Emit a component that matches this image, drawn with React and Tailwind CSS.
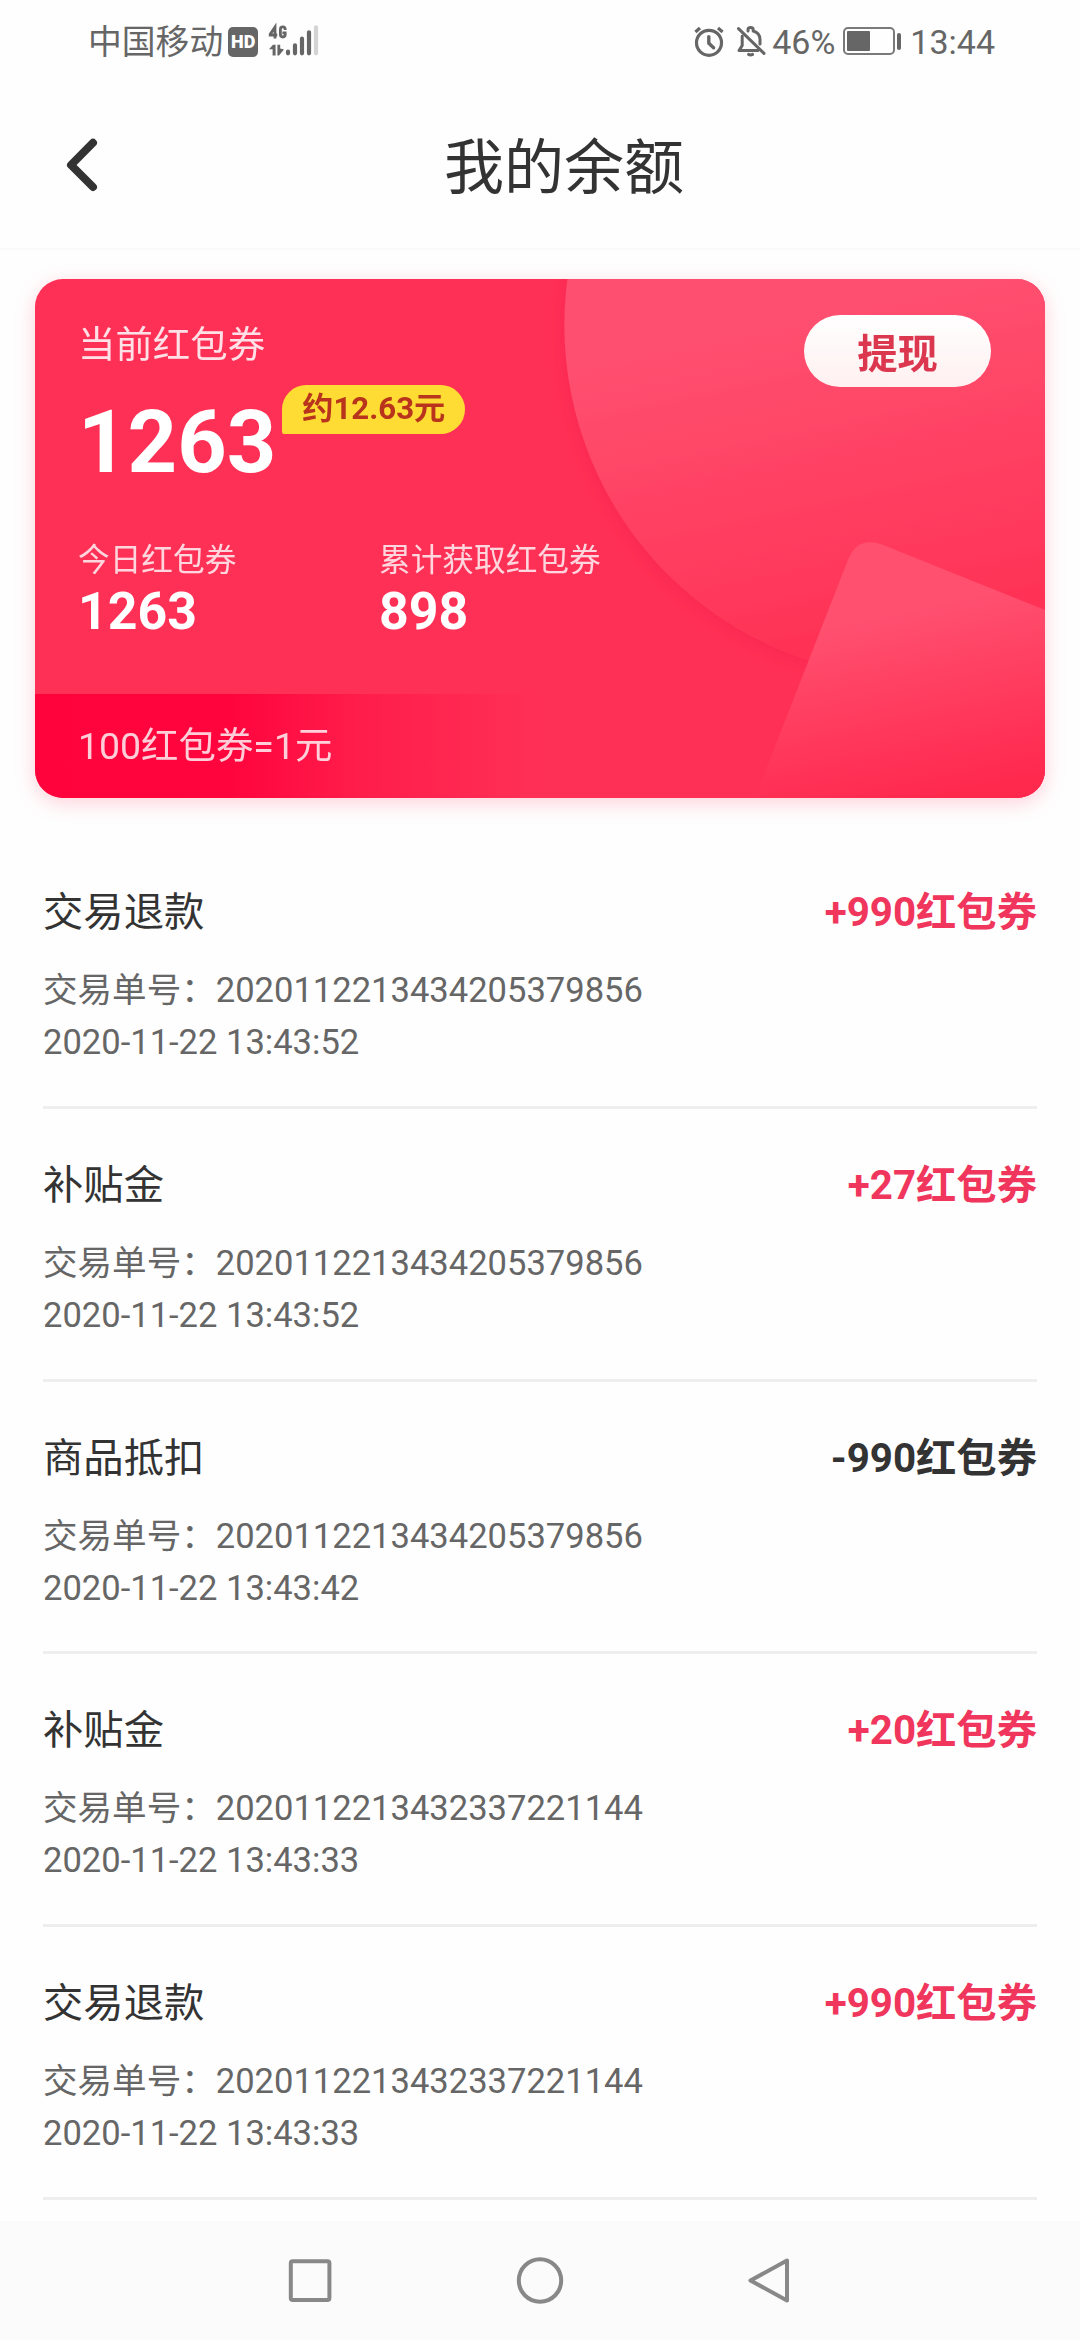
const records = [
  { title: "交易退款", amount: "+990红包券", no: "2020112213434205379856", time: "2020-11-22 13:43:52" },
  { title: "补贴金", amount: "+27红包券", no: "2020112213434205379856", time: "2020-11-22 13:43:52" },
  { title: "商品抵扣", amount: "-990红包券", no: "2020112213434205379856", time: "2020-11-22 13:43:42" },
  { title: "补贴金", amount: "+20红包券", no: "2020112213432337221144", time: "2020-11-22 13:43:33" },
  { title: "交易退款", amount: "+990红包券", no: "2020112213432337221144", time: "2020-11-22 13:43:33" },
];

function SignalIcon() {
  return (
    <svg className="ml-[9px] h-[32px] w-[54px] overflow-visible" viewBox="0 0 54 32" fill="none">
      <g stroke="#666" strokeWidth="2.8">
        <path d="M8 12.4V1L3.2 8.2V9H10.2" />
        <path d="M18.2 4V3.2Q18.2 0.8 15.8 0.8Q13.4 0.8 13.4 3.2V8.6Q13.4 11 15.8 11Q18.2 11 18.2 8.6V6.8H15.4" />
      </g>
      <path d="M2 23.2L6 18.8H8.6V29.6H5.6V23.2ZM10.4 18.8H13.2V22.6L17 23.4L12 29.6H10.4Z" fill="#666" />
      <g stroke="#666" strokeWidth="4.2" strokeLinecap="round">
        <path d="M21 25.6V27.3M28 19.3V27.3M35 12.7V27.3M42 6.3V27.3" />
      </g>
      <path d="M49 1.3V27.3" stroke="#d4d4d4" strokeWidth="4.2" strokeLinecap="round" />
    </svg>
  );
}

function AlarmIcon() {
  return (
    <svg className="h-[32px] w-[32px]" viewBox="0 0 32 32" fill="none" stroke="#666" strokeLinecap="round" strokeLinejoin="round">
      <circle cx="16" cy="16.8" r="12.5" strokeWidth="3.2" />
      <path d="M15.8 10.6V17.2L20.6 21.8" strokeWidth="3.4" />
      <path d="M2.4 6L7 2M29.6 6L25 2" strokeWidth="3.2" strokeLinecap="butt" />
    </svg>
  );
}

function MutedBellIcon() {
  return (
    <svg className="ml-[11px] h-[32px] w-[30px]" viewBox="0 0 30 32" fill="none" stroke="#666" strokeWidth="3" strokeLinecap="round" strokeLinejoin="round">
      <path d="M2.5 2.6L28 27.4" />
      <path d="M6.2 10V19.5L3 24.6H22" />
      <path d="M12 5V3.8Q12 1.6 14.6 1.6Q17.2 1.6 17.2 3.8V5Q24 7 24 13.5V18" />
      <path d="M12.6 28.4Q14.6 29.6 16.6 28.4" />
    </svg>
  );
}

function StatusBar() {
  return (
    <div className="flex h-[84px] items-center justify-between pr-[85px] pl-[88px] text-[34px] leading-[40px] text-[#666]">
      <div className="flex items-center">
        <span className="mt-[2px] text-[33.8px]">中国移动</span>
        <span className="ml-[5px] flex h-[30px] w-[30px] items-center justify-center rounded-[5px] bg-[#666] font-['Roboto'] text-[18px] leading-[30px] font-black text-white">
          HD
        </span>
        <SignalIcon />
      </div>
      <div className="flex items-center">
        <AlarmIcon />
        <MutedBellIcon />
        <span className="ml-[6px] -mt-[1px]">46%</span>
        <span className="ml-[8px] -mt-[2px] flex h-[28px] w-[52px] rounded-[5px] border-2 border-[#7a7a7a] p-[2px]">
          <span className="h-full w-[23px] rounded-[1px] bg-[#666]" />
        </span>
        <span className="ml-[2px] -mt-[2px] h-[17px] w-[4px] rounded-full bg-[#666]" />
        <span className="ml-[9px] -mt-[1px]">13:44</span>
      </div>
    </div>
  );
}

function Header() {
  return (
    <header className="flex h-[166px] items-center border-b-2 border-[#fafafa]">
      <svg className="ml-[64px] h-[60px] w-[36px]" viewBox="0 0 36 60" fill="none" stroke="#333" strokeWidth="8" strokeLinecap="round" strokeLinejoin="round">
        <path d="M29 6.8L7 29L29 51" />
      </svg>
      <h1 className="mt-[6px] ml-[344px] text-[60px] leading-[72px] text-[#333]">我的余额</h1>
    </header>
  );
}

function CardArt() {
  return (
    <svg className="absolute inset-0 h-full w-full" viewBox="0 0 1010 519" fill="none">
      <defs>
        <linearGradient id="disc" gradientUnits="userSpaceOnUse" x1="640" y1="60" x2="710" y2="390">
          <stop offset="0" stopColor="#ff5070" />
          <stop offset="0.95" stopColor="#ff3357" />
        </linearGradient>
        <linearGradient id="tile" gradientUnits="userSpaceOnUse" x1="880" y1="330" x2="920" y2="519">
          <stop offset="0" stopColor="#ff5070" />
          <stop offset="0.7" stopColor="#ff3357" />
          <stop offset="1" stopColor="#ff284d" />
        </linearGradient>
        <linearGradient id="band" x1="0" y1="0" x2="1" y2="0">
          <stop offset="0" stopColor="#ff033c" />
          <stop offset="0.19" stopColor="#ff043d" />
          <stop offset="0.32" stopColor="#ff1d4b" />
          <stop offset="0.5" stopColor="#ff3056" />
          <stop offset="1" stopColor="#ff3056" />
        </linearGradient>
        <filter id="discShade" x="-20%" y="-20%" width="140%" height="140%">
          <feDropShadow dx="-3" dy="5" stdDeviation="8" floodColor="#d8103c" floodOpacity="0.16" />
        </filter>
      </defs>
      <rect y="415" width="1010" height="104" fill="url(#band)" />
      <circle cx="882" cy="46" r="352.6" fill="url(#disc)" filter="url(#discShade)" />
      <path d="M720 519L813.5 279.5Q823 257 847 265.5L1010 331V519Z" fill="url(#tile)" />
    </svg>
  );
}

function BalanceCard() {
  return (
    <section className="relative mx-[35px] mt-[29px] h-[519px] overflow-hidden rounded-[28px] bg-[#ff3056] text-white">
      <CardArt />
      <div className="relative flex h-full flex-col">
        <div className="flex h-[415px] flex-col pl-[43px]">
          <div className="flex items-start justify-between pr-[54px]">
            <div>
              <p className="mt-[44px] text-[37.44px] leading-[44px] text-white/85">当前红包券</p>
              <div className="mt-[18px] flex">
                <span className="pt-[2px] text-[86.4px] leading-[112px] font-bold">1263</span>
                <span className="ml-[6px] h-[49px] w-[183px] rounded-[24.5px] rounded-bl-[2px] bg-[#ffdc33] text-center text-[31.2px] leading-[48px] font-bold whitespace-nowrap text-[#b8341c]">
                  约12.63元
                </span>
              </div>
            </div>
            <button className="mt-[36px] h-[72px] w-[187px] rounded-full bg-linear-to-b from-white to-[#fff0f0] text-[40.32px] leading-[79px] font-bold text-[#db3850]">
              提现
            </button>
          </div>
          <div className="mt-[41px] flex">
            <div className="w-[301px]">
              <p className="text-[31.68px] leading-[42px] text-white/80">今日红包券</p>
              <p className="text-[51.84px] leading-[60px] font-bold">1263</p>
            </div>
            <div>
              <p className="text-[31.68px] leading-[42px] text-white/80">累计获取红包券</p>
              <p className="text-[51.84px] leading-[60px] font-bold">898</p>
            </div>
          </div>
        </div>
        <p className="pl-[43px] text-[37.44px] leading-[104px] text-white/80">100红包券=1元</p>
      </div>
    </section>
  );
}

function RecordRow({ record }) {
  const amountColor = record.amount.startsWith("+") ? "text-[#f0365c]" : "text-[#333]";
  return (
    <li className="h-[272.75px] border-b-[3px] border-[#eee] pt-[52px]">
      <div className="flex justify-between text-[40.32px] leading-[50px]">
        <span className="text-[#333]">{record.title}</span>
        <span className={"font-bold " + amountColor}>{record.amount}</span>
      </div>
      <div className="mt-[26px] text-[34.56px] leading-[52px] text-[#666]">
        <p>交易单号：{record.no}</p>
        <p>{record.time}</p>
      </div>
    </li>
  );
}

function NavBar() {
  return (
    <nav className="flex h-[119px] items-center justify-center gap-[182px] bg-[#fbfbfb]">
      <svg className="h-[48px] w-[48px]" viewBox="0 0 48 48" fill="none" stroke="#888" strokeWidth="4">
        <rect x="4.8" y="4.3" width="38.6" height="38.6" rx="2" />
      </svg>
      <svg className="h-[48px] w-[48px]" viewBox="0 0 48 48" fill="none" stroke="#888" strokeWidth="4">
        <circle cx="24" cy="23.5" r="21.2" />
      </svg>
      <svg className="h-[48px] w-[48px]" viewBox="0 0 48 48" fill="none" stroke="#888" strokeWidth="4" strokeLinejoin="round">
        <path d="M41 3.5V43.5L4.5 23.5Z" />
      </svg>
    </nav>
  );
}

export default function App() {
  return (
    <div className="flex h-[2340px] w-[1080px] flex-col overflow-hidden bg-[#fefefe] font-['Roboto','Noto_Sans_CJK_SC',sans-serif]">
      <StatusBar />
      <Header />
      <div className="[filter:drop-shadow(0_5px_10px_rgba(255,48,86,0.22))]">
        <BalanceCard />
      </div>
      <ul className="mx-[43px] mt-[38px] flex-1">
        {records.map((record, i) => (
          <RecordRow key={i} record={record} />
        ))}
      </ul>
      <NavBar />
    </div>
  );
}
